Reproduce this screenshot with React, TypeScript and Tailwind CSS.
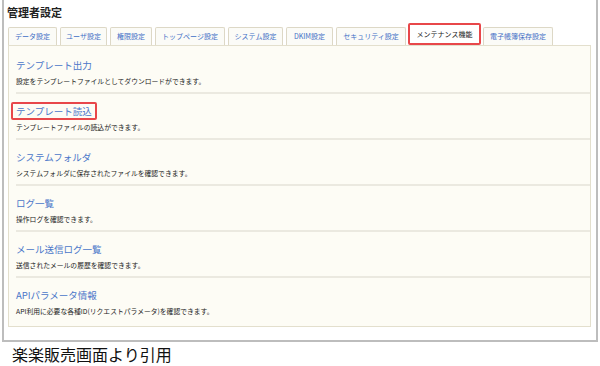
import React from 'react';

const tabs = [
  { label: 'データ設定', w: 'w-[49px]' },
  { label: 'ユーザ設定', w: 'w-[47px]' },
  { label: '権限設定', w: 'w-[42px]' },
  { label: 'トップページ設定', w: 'w-[70px]' },
  { label: 'システム設定', w: 'w-[55px]' },
  { label: 'DKIM設定', w: 'w-[47px]' },
  { label: 'セキュリティ設定', w: 'w-[70px]' },
  { label: 'メンテナンス機能', w: 'w-[73px]', active: true },
  { label: '電子帳簿保存設定', w: 'w-[70px]' },
];

const items = [
  { title: 'テンプレート出力', desc: '設定をテンプレートファイルとしてダウンロードができます。' },
  { title: 'テンプレート読込', desc: 'テンプレートファイルの読込ができます。', marked: true },
  { title: 'システムフォルダ', desc: 'システムフォルダに保存されたファイルを確認できます。' },
  { title: 'ログ一覧', desc: '操作ログを確認できます。' },
  { title: 'メール送信ログ一覧', desc: '送信されたメールの履歴を確認できます。' },
  { title: 'APIパラメータ情報', desc: 'API利用に必要な各種ID(リクエストパラメータ)を確認できます。' },
];

export default function App() {
  return (
    <div
      className="w-[600px] h-[366px] bg-white overflow-hidden"
      style={{ fontFamily: '"Noto Sans CJK JP", "Noto Sans", sans-serif' }}
    >
      <div className="ml-[2px] w-[596px] h-[342px] border-x-2 border-b-2 border-[#bdbdbd] px-[4px] pt-[4px]">
        <h1 className="text-[11px] font-bold leading-[16px] text-[#222] -ml-[1px]">管理者設定</h1>

        <div className="flex items-end gap-[3px] mt-[3px] h-[22px] relative z-10">
          {tabs.map((t) =>
            t.active ? (
              <div
                key={t.label}
                className={`${t.w} h-[22px] -mx-[1px] flex items-center justify-center bg-white border-2 border-[#e8474a] rounded-[2px] text-[7px] text-[#222]`}
              >
                {t.label}
              </div>
            ) : (
              <div
                key={t.label}
                className={`${t.w} h-[18px] flex items-center justify-center bg-[#fbfbf7] border border-b-0 border-[#ddd8c6] rounded-t-[2px] text-[7px] text-[#3f6fc6]`}
              >
                {t.label}
              </div>
            )
          )}
        </div>

        <div className="w-[583px] h-[282px] bg-[#fdfcf5] border border-[#e3dfcd] pl-[7px] pt-[2px]">
          {items.map((it, i) => (
            <div
              key={it.title}
              className={`pt-[8px] pb-[5px] ${i < items.length - 1 ? 'border-b-2 border-[#ebe9e0]' : ''}`}
            >
              {it.marked ? (
                <div className="w-fit -ml-[5px] px-[3px] border-2 border-[#e8474a] rounded-[2px] text-[9.5px] leading-[14px] text-[#4a76c9]">
                  {it.title}
                </div>
              ) : (
                <div className="text-[9.5px] leading-[18px] text-[#4a76c9]">{it.title}</div>
              )}
              <div className="text-[6.8px] leading-[12px] text-[#222] mt-[1px]">{it.desc}</div>
            </div>
          ))}
        </div>
      </div>
      <div className="pl-[12px] pt-[1px] text-[16px] leading-[22px] text-[#111]">楽楽販売画面より引用</div>
    </div>
  );
}
